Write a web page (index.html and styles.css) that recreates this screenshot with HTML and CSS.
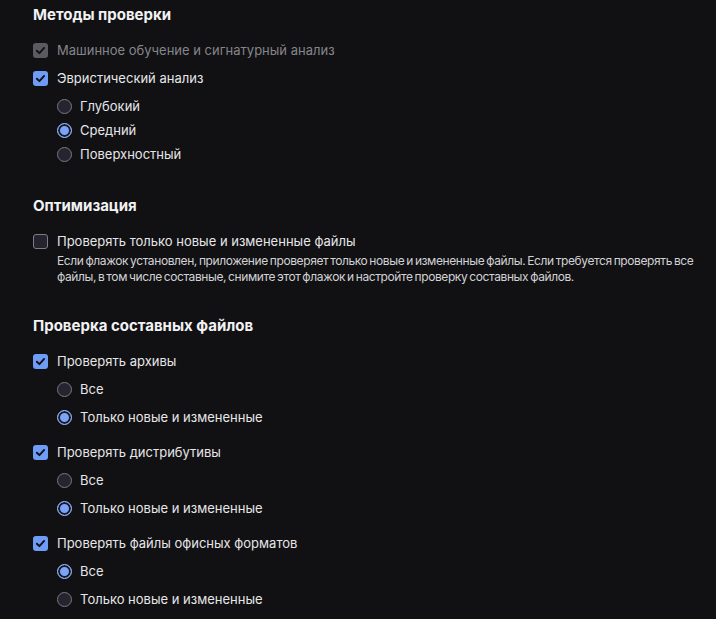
FILE: index.html
```html
<!DOCTYPE html>
<html lang="ru">
<head>
<meta charset="utf-8">
<link rel="stylesheet" href="styles.css">
</head>
<body>
<main class="page">
  <section class="section section--first">
    <h2 class="heading">Методы проверки</h2>
    <div class="check-row check-row--disabled">
      <span class="box box--on box--disabled"><svg viewBox="0 0 14 14"><path d="M3.6 7.2 L6 9.5 L10.4 4.6"/></svg></span>
      <span class="label">Машинное обучение и сигнатурный анализ</span>
    </div>
    <div class="check-row">
      <span class="box box--on"><svg viewBox="0 0 14 14"><path d="M3.6 7.2 L6 9.5 L10.4 4.6"/></svg></span>
      <span class="label">Эвристический анализ</span>
    </div>
    <div class="radios radios--compact">
      <div class="radio-row"><span class="radio"></span><span class="label">Глубокий</span></div>
      <div class="radio-row"><span class="radio radio--on"></span><span class="label">Средний</span></div>
      <div class="radio-row"><span class="radio"></span><span class="label">Поверхностный</span></div>
    </div>
  </section>

  <section class="section">
    <h2 class="heading">Оптимизация</h2>
    <div class="check-row">
      <span class="box"></span>
      <span class="label">Проверять только новые и измененные файлы</span>
    </div>
    <p class="desc">Если флажок установлен, приложение проверяет только новые и измененные файлы. Если требуется проверять все файлы, в том числе составные, снимите этот флажок и настройте проверку составных файлов.</p>
  </section>

  <section class="section">
    <h2 class="heading">Проверка составных файлов</h2>
    <div class="group">
      <div class="check-row">
        <span class="box box--on"><svg viewBox="0 0 14 14"><path d="M3.6 7.2 L6 9.5 L10.4 4.6"/></svg></span>
        <span class="label">Проверять архивы</span>
      </div>
      <div class="radios">
        <div class="radio-row"><span class="radio"></span><span class="label">Все</span></div>
        <div class="radio-row"><span class="radio radio--on"></span><span class="label">Только новые и измененные</span></div>
      </div>
    </div>
    <div class="group">
      <div class="check-row">
        <span class="box box--on"><svg viewBox="0 0 14 14"><path d="M3.6 7.2 L6 9.5 L10.4 4.6"/></svg></span>
        <span class="label">Проверять дистрибутивы</span>
      </div>
      <div class="radios">
        <div class="radio-row"><span class="radio"></span><span class="label">Все</span></div>
        <div class="radio-row"><span class="radio radio--on"></span><span class="label">Только новые и измененные</span></div>
      </div>
    </div>
    <div class="group">
      <div class="check-row">
        <span class="box box--on"><svg viewBox="0 0 14 14"><path d="M3.6 7.2 L6 9.5 L10.4 4.6"/></svg></span>
        <span class="label">Проверять файлы офисных форматов</span>
      </div>
      <div class="radios">
        <div class="radio-row"><span class="radio radio--on"></span><span class="label">Все</span></div>
        <div class="radio-row"><span class="radio"></span><span class="label">Только новые и измененные</span></div>
      </div>
    </div>
  </section>
</main>
</body>
</html>
```

FILE: styles.css
```css
html, body {
  margin: 0;
  padding: 0;
  background: #111113;
  height: 100%;
  overflow: hidden;
}

.page {
  font-family: Inter, "Noto Sans", sans-serif;
  color: #e6e6e9;
  padding: 5px 8px 0 33px;
}

.section {
  margin-top: 30px;
}

.section--first {
  margin-top: 0;
}

.heading {
  margin: 0 0 11px;
  font-size: 15px;
  line-height: 20px;
  font-weight: 700;
  color: #f2f2f4;
}

.check-row {
  display: flex;
  align-items: center;
  gap: 9px;
  height: 28px;
}

.check-row--disabled .label {
  color: #85858b;
}

.label {
  font-size: 13px;
  line-height: 16px;
}

.box {
  width: 15px;
  height: 15px;
  box-sizing: border-box;
  border-radius: 3px;
  border: 1.5px solid #7d7c88;
  background: #24232e;
  display: flex;
  align-items: center;
  justify-content: center;
  flex: none;
}

.box--on {
  border: none;
  background: #6e9cf7;
}

.box--disabled {
  background: #5a5a60;
}

.box svg {
  width: 15px;
  height: 15px;
}

.box svg path {
  fill: none;
  stroke: #121216;
  stroke-width: 1.8;
  stroke-linecap: round;
  stroke-linejoin: round;
}

.radios {
  padding-left: 24px;
}

.radios--compact {
  margin-top: 2px;
}

.radio-row {
  display: flex;
  align-items: center;
  gap: 8px;
  height: 28px;
}

.radios--compact .radio-row {
  height: 24px;
}

.radio {
  width: 15px;
  height: 15px;
  box-sizing: border-box;
  border-radius: 50%;
  border: 1.5px solid #7a7984;
  background: #25242f;
  flex: none;
}

.radio--on {
  border-color: #93b5f9;
  background: #7aa3f9;
  box-shadow: inset 0 0 0 2px #1a1a22;
}

.group + .group {
  margin-top: 7px;
}

.desc {
  margin: -2px 0 0 24px;
  padding-bottom: 1px;
  font-size: 12px;
  letter-spacing: -0.4px;
  word-spacing: -1px;
  line-height: 16px;
  color: #d2d2d6;
}
```
